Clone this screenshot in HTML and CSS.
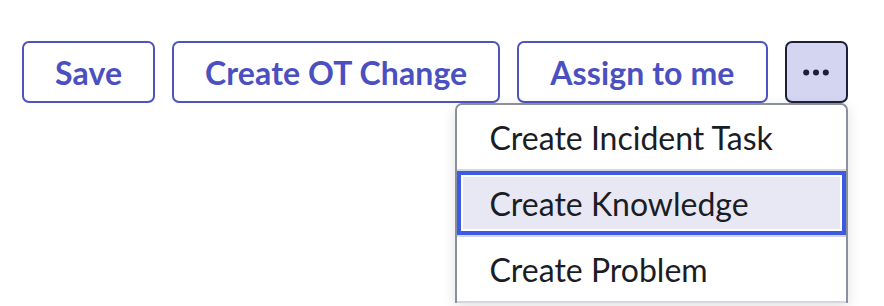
FILE: index.html
```html
<!DOCTYPE html>
<html lang="en">
<head>
    <meta charset="UTF-8">
    <meta name="viewport" content="width=device-width, initial-scale=1.0">
    <title>Record actions</title>
    <link rel="stylesheet" href="styles.css">
</head>
<body>
    <div class="toolbar">
        <button class="btn">Save</button>
        <button class="btn">Create OT Change</button>
        <button class="btn">Assign to me</button>
        <div class="more-wrap">
            <button class="btn btn-more" aria-label="More actions">
                <svg width="26" height="7" viewBox="0 0 26 7">
                    <circle cx="3.2" cy="3.5" r="3" fill="#1e1f3a"/>
                    <circle cx="13" cy="3.5" r="3" fill="#1e1f3a"/>
                    <circle cx="22.8" cy="3.5" r="3" fill="#1e1f3a"/>
                </svg>
            </button>
            <ul class="menu">
                <li class="menu-item">Create Incident Task</li>
                <li class="menu-item focused">Create Knowledge</li>
                <li class="menu-item">Create Problem</li>
            </ul>
        </div>
    </div>
</body>
</html>
```

FILE: styles.css
```css
body {
    margin: 0;
    font-family: Lato, "Open Sans", sans-serif;
    background: #fff;
    min-height: 306px;
}

.toolbar {
    display: flex;
    align-items: flex-start;
    gap: 17px;
    padding: 41px 0 0 22px;
}

.btn {
    height: 62px;
    padding: 0 31px;
    border: 2px solid #4f53c2;
    border-radius: 7px;
    background: #fff;
    color: #4b50c0;
    font-family: Lato, sans-serif;
    font-weight: 700;
    font-size: 32px;
    letter-spacing: 0.1px;
    cursor: pointer;
}

.more-wrap {
    position: relative;
    height: 62px;
}

.btn-more {
    width: 63px;
    padding: 0;
    display: flex;
    align-items: center;
    justify-content: center;
    background: #d4d5f0;
    border-color: #1e1f3a;
}

.menu {
    position: absolute;
    z-index: 10;
    top: 62px;
    right: 0;
    width: 389px;
    margin: 0;
    padding: 0;
    list-style: none;
    border: 2px solid #8a909d;
    border-bottom: none;
    border-radius: 7px 7px 0 0;
    background: #fff;
    box-shadow: 0 4px 14px rgba(0, 0, 0, 0.12);
}

.menu-item {
    box-sizing: border-box;
    height: 66px;
    padding-left: 33px;
    display: flex;
    align-items: center;
    border-bottom: 2px solid #d6d7dd;
    font-size: 32px;
    color: #1b1d24;
}

.menu-item.focused {
    background: #e8e8f5;
    box-shadow: inset 0 0 0 4px #3d5be0, inset 0 0 0 6px #fff;
}
```
